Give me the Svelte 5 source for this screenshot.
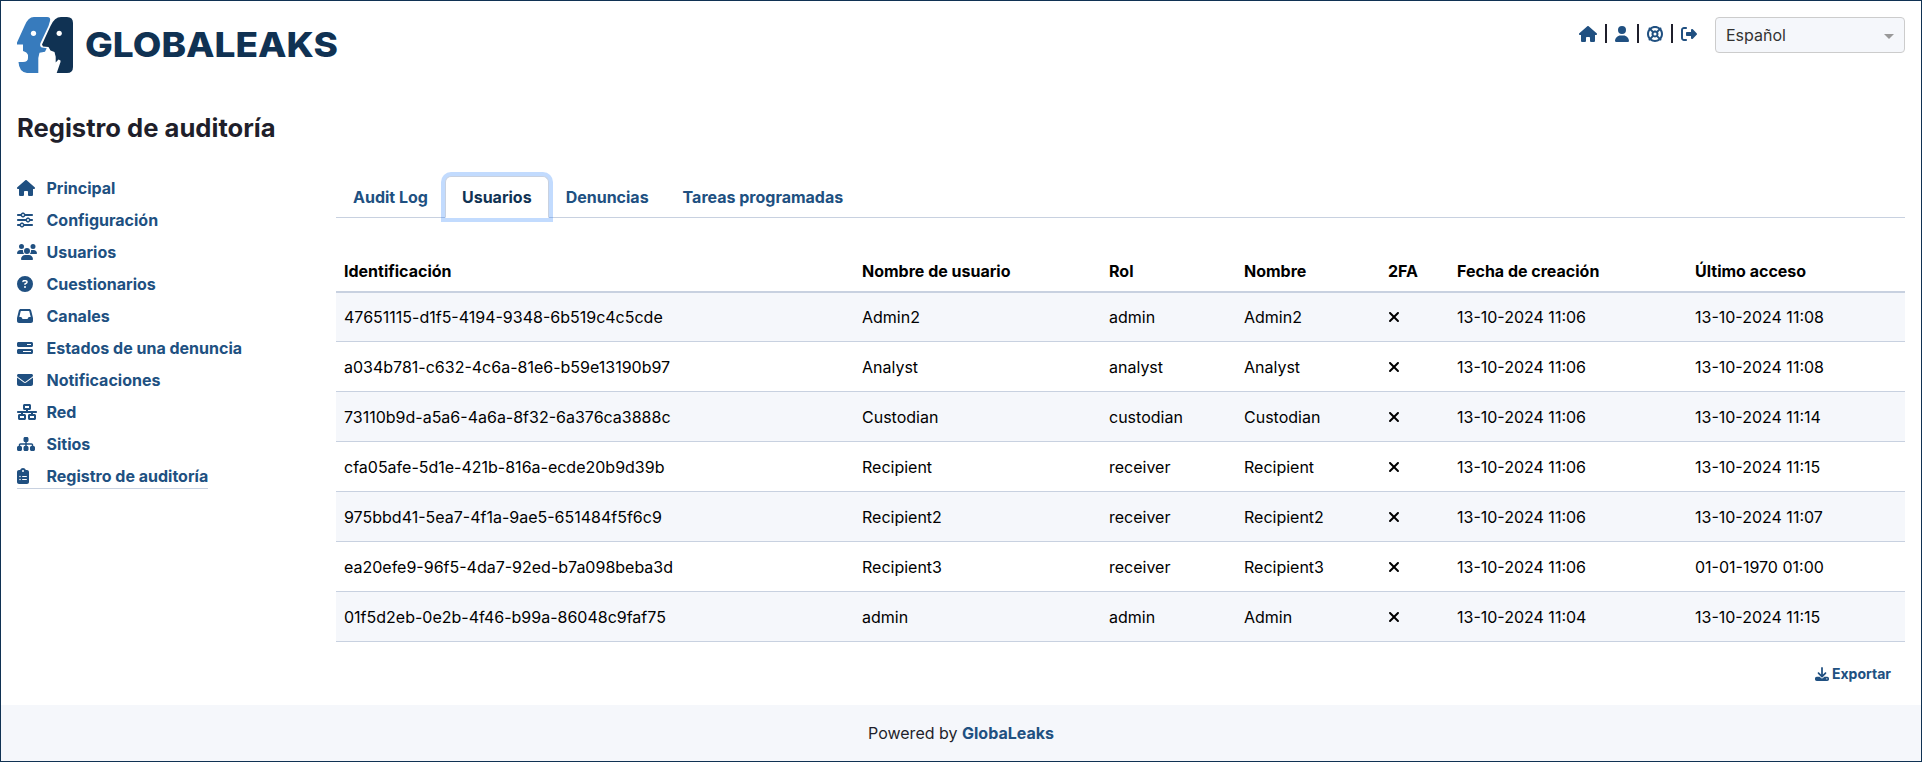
<script>
  const icons = {
    house: [576, 'M575.8 255.5c0 18-15 32.1-32 32.1h-32l.7 160.2c0 2.7-.2 5.4-.5 8.1V472c0 22.1-17.9 40-40 40H456c-1.1 0-2.2 0-3.3-.1c-1.4 .1-2.8 .1-4.2 .1H416 392c-22.1 0-40-17.9-40-40V448 384c0-17.7-14.3-32-32-32H256c-17.7 0-32 14.3-32 32v64 24c0 22.1-17.9 40-40 40H160 128.1c-1.5 0-3-.1-4.5-.2c-1.2 .1-2.4 .2-3.6 .2H104c-22.1 0-40-17.9-40-40V360c0-.9 0-1.9 .1-2.8V287.6H32c-18 0-32-14-32-32.1c0-9 3-17 10-24L266.4 8c7-7 15-8 22-8s15 2 21 7L564.8 231.5c8 7 12 15 11 24z'],
    user: [448, 'M224 256A128 128 0 1 0 224 0a128 128 0 1 0 0 256zm-45.7 48C79.8 304 0 383.8 0 482.3C0 498.7 13.3 512 29.7 512H418.3c16.4 0 29.7-13.3 29.7-29.7C448 383.8 368.2 304 269.7 304H178.3z'],
    ring: [512, 'M367.2 412.5C335.9 434.9 297.5 448 256 448s-79.9-13.1-111.2-35.5l58-58c15.8 8.6 34 13.5 53.3 13.5s37.4-4.9 53.3-13.5l58 58zm90.7 .8c33.8-43.4 54-98 54-157.3s-20.2-113.9-54-157.3c9-12.5 7.9-30.1-3.4-41.3S425.8 45 413.3 54C369.9 20.2 315.3 0 256 0S142.1 20.2 98.7 54c-12.5-9-30.1-7.9-41.3 3.4S45 86.2 54 98.7C20.2 142.1 0 196.7 0 256s20.2 113.9 54 157.3c-9 12.5-7.9 30.1 3.4 41.3S86.2 467 98.7 458c43.4 33.8 98 54 157.3 54s113.9-20.2 157.3-54c12.5 9 30.1 7.9 41.3-3.4s12.4-28.8 3.4-41.3zm-45.5-46.1l-58-58c8.6-15.8 13.5-34 13.5-53.3s-4.9-37.4-13.5-53.3l58-58C434.9 176.1 448 214.5 448 256s-13.1 79.9-35.5 111.2zM367.2 99.5l-58 58c-15.8-8.6-34-13.5-53.3-13.5s-37.4 4.9-53.3 13.5l-58-58C176.1 77.1 214.5 64 256 64s79.9 13.1 111.2 35.5zM157.5 309.3l-58 58C77.1 335.9 64 297.5 64 256s13.1-79.9 35.5-111.2l58 58c-8.6 15.8-13.5 34-13.5 53.3s4.9 37.4 13.5 53.3zM208 256a48 48 0 1 1 96 0 48 48 0 1 1 -96 0z'],
    exit: [512, 'M377.9 105.9L500.7 228.7c7.2 7.2 11.3 17.1 11.3 27.3s-4.1 20.1-11.3 27.3L377.9 406.1c-6.4 6.4-15 9.9-24 9.9c-18.7 0-33.9-15.2-33.9-33.9l0-62.1-128 0c-17.7 0-32-14.3-32-32l0-64c0-17.7 14.3-32 32-32l128 0 0-62.1c0-18.7 15.2-33.9 33.9-33.9c9 0 17.6 3.6 24 9.9zM160 96L96 96c-17.7 0-32 14.3-32 32l0 256c0 17.7 14.3 32 32 32l64 0c17.7 0 32 14.3 32 32s-14.3 32-32 32l-64 0c-53 0-96-43-96-96L0 128C0 75 43 32 96 32l64 0c17.7 0 32 14.3 32 32s-14.3 32-32 32z'],
    sliders: [512, 'M0 416c0 17.7 14.3 32 32 32l54.7 0c12.3 28.3 40.5 48 73.3 48s61-19.7 73.3-48L480 448c17.7 0 32-14.3 32-32s-14.3-32-32-32l-246.7 0c-12.3-28.3-40.5-48-73.3-48s-61 19.7-73.3 48L32 384c-17.7 0-32 14.3-32 32zm128 0a32 32 0 1 1 64 0 32 32 0 1 1 -64 0zM320 256a32 32 0 1 1 64 0 32 32 0 1 1 -64 0zm32-80c-32.8 0-61 19.7-73.3 48L32 224c-17.7 0-32 14.3-32 32s14.3 32 32 32l246.7 0c12.3 28.3 40.5 48 73.3 48s61-19.7 73.3-48l54.7 0c17.7 0 32-14.3 32-32s-14.3-32-32-32l-54.7 0c-12.3-28.3-40.5-48-73.3-48zM192 128a32 32 0 1 1 0-64 32 32 0 1 1 0 64zm73.3-64C253 35.7 224.8 16 192 16s-61 19.7-73.3 48L32 64C14.3 64 0 78.3 0 96s14.3 32 32 32l86.7 0c12.3 28.3 40.5 48 73.3 48s61-19.7 73.3-48L480 128c17.7 0 32-14.3 32-32s-14.3-32-32-32L265.3 64z'],
    users: [640, 'M144 0a80 80 0 1 1 0 160A80 80 0 1 1 144 0zM512 0a80 80 0 1 1 0 160A80 80 0 1 1 512 0zM0 298.7C0 239.8 47.8 192 106.7 192h42.7c15.9 0 31 3.5 44.6 9.7c-1.3 7.2-1.9 14.7-1.9 22.3c0 38.2 16.8 72.5 43.3 96c-.2 0-.4 0-.7 0H21.3C9.6 320 0 310.4 0 298.7zM405.3 320c-.2 0-.4 0-.7 0c26.6-23.5 43.3-57.8 43.3-96c0-7.6-.7-15-1.9-22.3c13.6-6.3 28.7-9.7 44.6-9.7h42.7C592.2 192 640 239.8 640 298.7c0 11.8-9.6 21.3-21.3 21.3H405.3zM224 224a96 96 0 1 1 192 0 96 96 0 1 1 -192 0zM128 485.3C128 411.7 187.7 352 261.3 352H378.7C452.3 352 512 411.7 512 485.3c0 14.7-11.9 26.7-26.7 26.7H154.7c-14.7 0-26.7-11.9-26.7-26.7z'],
    question: [512, 'M256 512A256 256 0 1 0 256 0a256 256 0 1 0 0 512zM169.8 165.3c7.9-22.3 29.1-37.3 52.8-37.3h58.3c34.9 0 63.1 28.3 63.1 63.1c0 22.6-12.1 43.5-31.7 54.8L280 264.4c-.2 13-10.9 23.6-24 23.6c-13.3 0-24-10.7-24-24V250.5c0-8.6 4.6-16.5 12.1-20.8l44.3-25.4c4.7-2.7 7.6-7.7 7.6-13.1c0-8.4-6.8-15.1-15.1-15.1H222.6c-3.4 0-6.4 2.1-7.5 5.3l-.4 1.2c-4.4 12.5-18.2 19-30.6 14.6s-19-18.2-14.6-30.6l.4-1.2zM224 352a32 32 0 1 1 64 0 32 32 0 1 1 -64 0z'],
    inbox: [512, 'M121 32C91.6 32 66 52 58.9 80.5L1.9 308.4C.6 313.5 0 318.7 0 323.9V416c0 35.3 28.7 64 64 64H448c35.3 0 64-28.7 64-64V323.9c0-5.2-.6-10.4-1.9-15.5l-57-227.9C446 52 420.4 32 391 32H121zm0 64H391l48 192H387.8c-12.1 0-23.2 6.8-28.6 17.7l-14.3 28.6c-5.4 10.8-16.5 17.7-28.6 17.7H195.8c-12.1 0-23.2-6.8-28.6-17.7l-14.3-28.6c-5.4-10.8-16.5-17.7-28.6-17.7H73L121 96z'],
    progress: [512, 'M448 160H320V128H448v32zM48 64C21.5 64 0 85.5 0 112v64c0 26.5 21.5 48 48 48H464c26.5 0 48-21.5 48-48V112c0-26.5-21.5-48-48-48H48zM448 352v32H192V352H448zM48 288c-26.5 0-48 21.5-48 48v64c0 26.5 21.5 48 48 48H464c26.5 0 48-21.5 48-48V336c0-26.5-21.5-48-48-48H48z'],
    envelope: [512, 'M48 64C21.5 64 0 85.5 0 112c0 15.1 7.1 29.3 19.2 38.4L236.8 313.6c11.4 8.5 27 8.5 38.4 0L492.8 150.4c12.1-9.1 19.2-23.3 19.2-38.4c0-26.5-21.5-48-48-48H48zM0 176V384c0 35.3 28.7 64 64 64H448c35.3 0 64-28.7 64-64V176L294.4 339.2c-22.8 17.1-54 17.1-76.8 0L0 176z'],
    network: [640, 'M256 64H384v64H256V64zM240 0c-26.5 0-48 21.5-48 48v96c0 26.5 21.5 48 48 48h48v32H32c-17.7 0-32 14.3-32 32s14.3 32 32 32h96v32H80c-26.5 0-48 21.5-48 48v96c0 26.5 21.5 48 48 48H240c26.5 0 48-21.5 48-48V368c0-26.5-21.5-48-48-48H192V288H448v32H400c-26.5 0-48 21.5-48 48v96c0 26.5 21.5 48 48 48H560c26.5 0 48-21.5 48-48V368c0-26.5-21.5-48-48-48H512V288h96c17.7 0 32-14.3 32-32s-14.3-32-32-32H352V192h48c26.5 0 48-21.5 48-48V48c0-26.5-21.5-48-48-48H240zM96 448V384H224v64H96zm320-64H544v64H416V384z'],
    sitemap: [576, 'M208 80c0-26.5 21.5-48 48-48h64c26.5 0 48 21.5 48 48v64c0 26.5-21.5 48-48 48h-8v40H464c30.9 0 56 25.1 56 56v32h8c26.5 0 48 21.5 48 48v64c0 26.5-21.5 48-48 48H464c-26.5 0-48-21.5-48-48V368c0-26.5 21.5-48 48-48h8V288c0-4.4-3.6-8-8-8H312v40h8c26.5 0 48 21.5 48 48v64c0 26.5-21.5 48-48 48H256c-26.5 0-48-21.5-48-48V368c0-26.5 21.5-48 48-48h8V280H112c-4.4 0-8 3.6-8 8v32h8c26.5 0 48 21.5 48 48v64c0 26.5-21.5 48-48 48H48c-26.5 0-48-21.5-48-48V368c0-26.5 21.5-48 48-48h8V288c0-30.9 25.1-56 56-56H264V192h-8c-26.5 0-48-21.5-48-48V80z'],
    clipboard: [384, 'M192 0c-41.8 0-77.4 26.7-90.5 64H64C28.7 64 0 92.7 0 128V448c0 35.3 28.7 64 64 64H320c35.3 0 64-28.7 64-64V128c0-35.3-28.7-64-64-64H282.5C269.4 26.7 233.8 0 192 0zm0 64a32 32 0 1 1 0 64 32 32 0 1 1 0-64zM72 272a24 24 0 1 1 48 0 24 24 0 1 1 -48 0zm104-16H304c8.8 0 16 7.2 16 16s-7.2 16-16 16H176c-8.8 0-16-7.2-16-16s7.2-16 16-16zM72 368a24 24 0 1 1 48 0 24 24 0 1 1 -48 0zm88 0c0-8.8 7.2-16 16-16H304c8.8 0 16 7.2 16 16s-7.2 16-16 16H176c-8.8 0-16-7.2-16-16z'],
    download: [512, 'M288 32c0-17.7-14.3-32-32-32s-32 14.3-32 32V274.7l-73.4-73.4c-12.5-12.5-32.8-12.5-45.3 0s-12.5 32.8 0 45.3l128 128c12.5 12.5 32.8 12.5 45.3 0l128-128c12.5-12.5 12.5-32.8 0-45.3s-32.8-12.5-45.3 0L288 274.7V32zM64 352c-35.3 0-64 28.7-64 64v32c0 35.3 28.7 64 64 64H448c35.3 0 64-28.7 64-64V416c0-35.3-28.7-64-64-64H346.5l-45.3 45.3c-25 25-65.5 25-90.5 0L165.5 352H64zm368 56a24 24 0 1 1 0 48 24 24 0 1 1 0-48z'],
    xmark: [384, 'M342.6 150.6c12.5-12.5 12.5-32.8 0-45.3s-32.8-12.5-45.3 0L192 210.7 86.6 105.4c-12.5-12.5-32.8-12.5-45.3 0s-12.5 32.8 0 45.3L146.7 256 41.4 361.4c-12.5 12.5-12.5 32.8 0 45.3s32.8 12.5 45.3 0L192 301.3 297.4 406.6c12.5 12.5 32.8 12.5 45.3 0s12.5-32.8 0-45.3L237.3 256 342.6 150.6z'],
  };

  const menu = [
    ['house', 'Principal'],
    ['sliders', 'Configuración'],
    ['users', 'Usuarios'],
    ['question', 'Cuestionarios'],
    ['inbox', 'Canales'],
    ['progress', 'Estados de una denuncia'],
    ['envelope', 'Notificaciones'],
    ['network', 'Red'],
    ['sitemap', 'Sitios'],
    ['clipboard', 'Registro de auditoría'],
  ];

  const tabs = ['Audit Log', 'Usuarios', 'Denuncias', 'Tareas programadas'];
  let activeTab = $state('Usuarios');

  const rows = [
    ['47651115-d1f5-4194-9348-6b519c4c5cde', 'Admin2', 'admin', 'Admin2', '13-10-2024 11:06', '13-10-2024 11:08'],
    ['a034b781-c632-4c6a-81e6-b59e13190b97', 'Analyst', 'analyst', 'Analyst', '13-10-2024 11:06', '13-10-2024 11:08'],
    ['73110b9d-a5a6-4a6a-8f32-6a376ca3888c', 'Custodian', 'custodian', 'Custodian', '13-10-2024 11:06', '13-10-2024 11:14'],
    ['cfa05afe-5d1e-421b-816a-ecde20b9d39b', 'Recipient', 'receiver', 'Recipient', '13-10-2024 11:06', '13-10-2024 11:15'],
    ['975bbd41-5ea7-4f1a-9ae5-651484f5f6c9', 'Recipient2', 'receiver', 'Recipient2', '13-10-2024 11:06', '13-10-2024 11:07'],
    ['ea20efe9-96f5-4da7-92ed-b7a098beba3d', 'Recipient3', 'receiver', 'Recipient3', '13-10-2024 11:06', '01-01-1970 01:00'],
    ['01f5d2eb-0e2b-4f46-b99a-86048c9faf75', 'admin', 'admin', 'Admin', '13-10-2024 11:04', '13-10-2024 11:15'],
  ];
</script>

{#snippet icon(name)}
  <svg class="icon" viewBox="0 0 {icons[name][0]} 512" style:width="{icons[name][0] / 512}em" aria-hidden="true">
    <path fill="currentColor" d={icons[name][1]} />
  </svg>
{/snippet}

<div class="page">
  <header>
    <svg class="logo" width="322" height="58" viewBox="0 0 322 58" role="img" aria-label="GLOBALEAKS">
      <path fill="#377bbd" d="M17 0H30Q34 0 33 4L31.500 9L23.300 26.500Q22.500 29.500 25 30.500L29.700 31.300L28 34.700L22.500 35.700L21.300 41V56H10Q2 55 1.500 45H6Q11 45 11 41V38Q10 35 6 34V27.600H0V25.500L7.500 9Q11 0 17 0Z" />
      <path fill="#103253" d="M44 0H50Q56 0 56 6V50Q56 56 50 56H39.700L43.500 45V43.500L41.500 42.500L38.700 45.500V39.700L37.500 35L33.500 33.500L31.500 30L26 29.500L25 27.500L33.500 9Q37.500 0 44 0Z" />
      <circle cx="16.500" cy="16.300" r="2.600" fill="#fff" />
      <circle cx="42.200" cy="16.300" r="2.600" fill="#fff" />
      <text x="68" y="40" textLength="253" lengthAdjust="spacingAndGlyphs">GLOBALEAKS</text>
    </svg>
    <div class="tools">
      <a href="#home" aria-label="Principal">{@render icon('house')}</a>
      <span class="bar"></span>
      <a href="#user" aria-label="Usuario">{@render icon('user')}</a>
      <span class="bar"></span>
      <a href="#help" aria-label="Ayuda">{@render icon('ring')}</a>
      <span class="bar"></span>
      <a href="#logout" aria-label="Salir">{@render icon('exit')}</a>
      <div class="select"><span>Español</span><i></i></div>
    </div>
  </header>

  <h1>Registro de auditoría</h1>

  <div class="body">
    <nav>
      {#each menu as [name, label], i}
        <a href="#menu" class:current={i === menu.length - 1}>
          <span class="slot">{@render icon(name)}</span>{label}
        </a>
      {/each}
    </nav>

    <main>
      <div class="tabs">
        {#each tabs as tab}
          <button class:active={activeTab === tab} onclick={() => (activeTab = tab)}>{tab}</button>
        {/each}
      </div>

      <table>
        <colgroup>
          <col class="c1" /><col class="c2" /><col class="c3" /><col class="c4" /><col class="c5" /><col class="c6" /><col />
        </colgroup>
        <thead>
          <tr>
            <th>Identificación</th><th>Nombre de usuario</th><th>Rol</th><th>Nombre</th><th>2FA</th><th>Fecha de creación</th><th>Último acceso</th>
          </tr>
        </thead>
        <tbody>
          {#each rows as [id, username, role, name, created, last]}
            <tr>
              <td>{id}</td><td>{username}</td><td>{role}</td><td>{name}</td>
              <td>{@render icon('xmark')}</td><td>{created}</td><td>{last}</td>
            </tr>
          {/each}
        </tbody>
      </table>

      <div class="actions">
        <button>{@render icon('download')} Exportar</button>
      </div>
    </main>
  </div>

  <footer>Powered by&nbsp;<a href="#globaleaks">GlobaLeaks</a></footer>
</div>

<style>
  :global(body) {
    margin: 0;
  }
  .page {
    box-sizing: border-box;
    height: 762px;
    display: flex;
    flex-direction: column;
    border: 1px solid #103253;
    background: #fff;
    color: #1f1f2b;
    font: 400 16px/24px Inter, sans-serif;
    overflow: hidden;
  }
  a {
    color: #205081;
    text-decoration: none;
    font-weight: 700;
  }
  button {
    font: inherit;
    font-weight: 700;
    color: #205081;
    background: none;
    border: 0;
    padding: 0;
  }
  .icon {
    height: 1em;
    display: inline-block;
    vertical-align: -2px;
  }
  header {
    display: flex;
    justify-content: space-between;
    align-items: flex-start;
    padding: 16px 16px 0;
    height: 82px;
  }
  .logo text {
    font: 800 34.5px Inter, sans-serif;
    fill: #103253;
  }
  .tools {
    display: flex;
    align-items: flex-start;
  }
  .tools a {
    line-height: 0;
    padding-top: 9px;
  }
  .tools .icon {
    display: block;
  }
  .bar {
    width: 2.5px;
    height: 19px;
    margin: 7px 8px 0 7.5px;
    background: #1f1f2b;
  }
  .select {
    box-sizing: border-box;
    display: flex;
    align-items: center;
    justify-content: space-between;
    width: 190px;
    height: 36px;
    margin-left: 18px;
    padding: 0 10px;
    border: 1px solid #ccc;
    border-radius: 4px;
    background: #f5f7fb;
    color: #333;
  }
  .select i {
    border: 5px solid transparent;
    border-top-color: #999;
    border-bottom: 0;
    margin-top: 2px;
  }
  h1 {
    margin: 13px 16px 0;
    font-size: 25.6px;
    line-height: 31px;
    font-weight: 700;
  }
  .body {
    display: flex;
    flex: 1;
    padding: 0 16px;
  }
  nav {
    display: flex;
    flex-direction: column;
    align-items: flex-start;
    width: 319px;
    padding-top: 31px;
  }
  nav a {
    display: flex;
    height: 27px;
    line-height: 26px;
    padding-top: 1px;
    border-bottom: 1px solid transparent;
    box-sizing: border-box;
    margin-bottom: 5px;
  }
  .slot {
    width: 29.500px;
  }
  nav a.current {
    border-color: #c8d1e0;
  }
  main {
    flex: 1;
    padding-top: 33px;
  }
  .tabs {
    display: flex;
    height: 42px;
    box-sizing: border-box;
    border-bottom: 1px solid #c8d1e0;
  }
  .tabs button {
    box-sizing: border-box;
    height: 42px;
    padding: 0 16px;
    border: 1px solid transparent;
  }
  .tabs .active {
    color: #103253;
    background: #fff;
    border-color: #c8d1e0 #c8d1e0 #fff;
    border-radius: 6px 6px 0 0;
    box-shadow: 0 0 0 4px rgba(13, 110, 253, 0.25);
  }
  table {
    width: 100%;
    margin-top: 33px;
    border-collapse: separate;
    border-spacing: 0;
    table-layout: fixed;
    color: #000;
  }
  .c1 { width: 518px; }
  .c2 { width: 247px; }
  .c3 { width: 135px; }
  .c4 { width: 144px; }
  .c5 { width: 69px; }
  .c6 { width: 238px; }
  th {
    height: 40px;
    padding: 0 8px;
    text-align: left;
    font-weight: 700;
    border-bottom: 2px solid #c8d1e0;
  }
  td {
    height: 49px;
    padding: 0 8px;
    border-bottom: 1px solid #c8d1e0;
  }
  tbody tr:first-child td {
    height: 48px;
  }
  tbody tr:nth-child(odd) {
    background: #f5f7fb;
  }
  .actions {
    display: flex;
    justify-content: flex-end;
    padding: 21px 14px 0 0;
  }
  .actions button {
    font-size: 14px;
    line-height: 21px;
  }
  footer {
    display: flex;
    justify-content: center;
    align-items: center;
    height: 56px;
    background: #f5f7fb;
  }
</style>
